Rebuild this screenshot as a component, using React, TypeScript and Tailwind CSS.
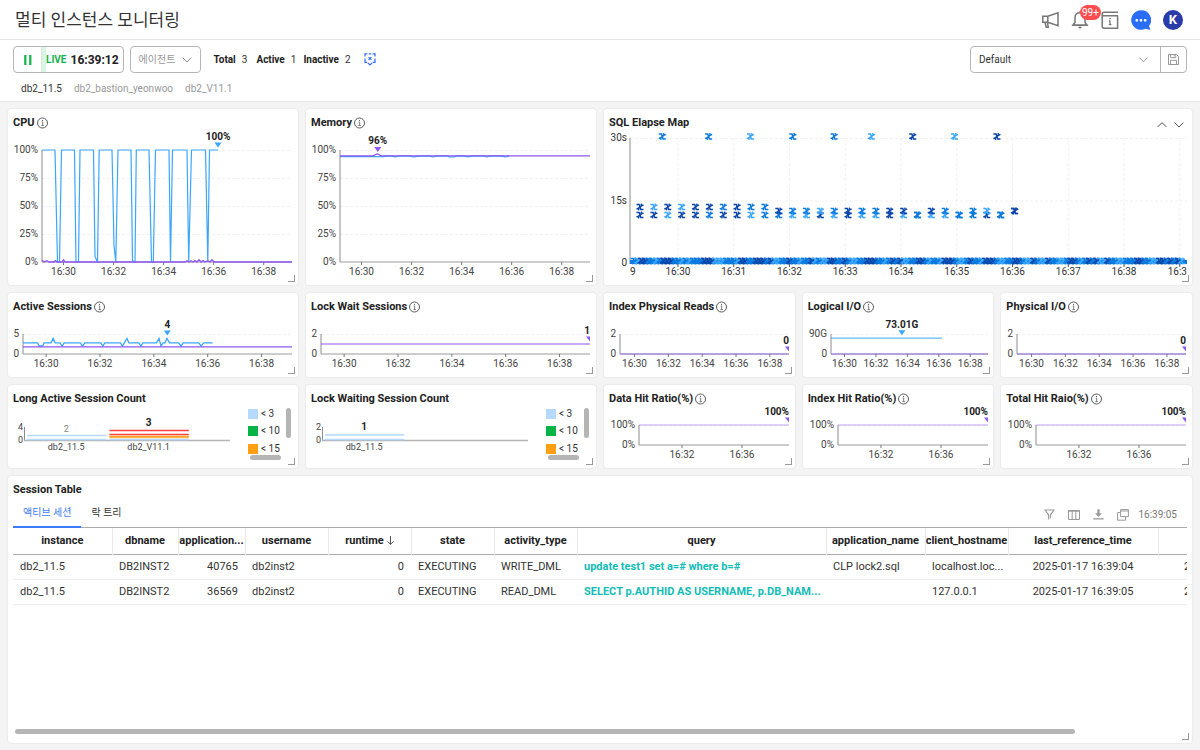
import { useLayoutEffect, useRef, useState } from "react";
import type { ReactNode } from "react";

const BLUE = "#3aa6ff";
const PURPLE = "#8e57f5";
const T0 = 29.14;
const T1 = 39.13;

type Point = [number, number];
type Series = { color: string; points: Point[]; width?: number; opacity?: number };
type Peak = { t: number; value: number; label: string; color: string };

function useWidth() {
  const ref = useRef<HTMLDivElement>(null);
  const [width, setWidth] = useState(0);
  useLayoutEffect(() => {
    const el = ref.current;
    if (!el) return;
    const update = () => setWidth(el.clientWidth);
    update();
    const observer = new ResizeObserver(update);
    observer.observe(el);
    return () => observer.disconnect();
  }, []);
  return { ref, width };
}

function InfoIcon() {
  return (
    <svg className="mb-px size-3" viewBox="0 0 12 12" fill="none" stroke="#5c5c5c" aria-hidden="true">
      <circle cx="5.5" cy="6" r="5" strokeWidth="1" />
      <path d="M4.7 5.1H5.7V8.6M4.4 8.6H6.9" strokeWidth="0.8" />
      <path d="M5.5 3v1" strokeWidth="1" />
    </svg>
  );
}

function Panel({
  title,
  info,
  span,
  tools,
  children,
}: {
  title: string;
  info?: boolean;
  span: string;
  tools?: ReactNode;
  children: ReactNode;
}) {
  return (
    <section className={`relative flex min-w-0 flex-col rounded-[3px] bg-white shadow-[0_0_2px_rgba(0,0,0,0.12)] ${span}`}>
      <header className="flex h-[21px] shrink-0 items-end gap-[2px] px-[5px]">
        <h2 className="text-[11px] leading-[14px] font-bold text-[#222]">{title}</h2>
        {info && <InfoIcon />}
        {tools}
      </header>
      {children}
      <span className="absolute right-[3px] bottom-[3px] size-[7px] border-r border-b border-[#999]" />
    </section>
  );
}

function LineChart({
  height,
  left,
  top,
  bottom,
  max,
  yTicks,
  xTicks = [30, 32, 34, 36, 38],
  series,
  peak,
}: {
  height: number;
  left: number;
  top: number;
  bottom: number;
  max: number;
  yTicks: [number, string][];
  xTicks?: number[];
  series: Series[];
  peak: Peak;
}) {
  const { ref, width } = useWidth();
  const right = width - 6;
  const x = (t: number) => left + ((t - T0) / (T1 - T0)) * (right - left);
  const y = (v: number) => bottom - (v / max) * (bottom - top);
  const px = x(peak.t);
  const py = y(peak.value);
  const atEdge = px > right - 8;
  return (
    <div ref={ref} className="w-full">
      {width > 0 && (
        <svg className="block" width={width} height={height} fontSize="10" fill="#444">
          {yTicks.map(([v, label]) => (
            <g key={label}>
              {v > 0 && <path d={`M${left} ${y(v) + 0.5}H${right}`} stroke="#f1f1f1" strokeDasharray="3 2" />}
              <text x={left - 4} y={y(v) + 3} textAnchor="end">
                {label}
              </text>
            </g>
          ))}
          <path d={`M${left} ${top}V${bottom}`} stroke="#8c8c8c" />
          <path d={`M${left} ${bottom}H${right}`} stroke="#9a9a9a" />
          {xTicks.map((t) => (
            <g key={t}>
              <path d={`M${x(t)} ${bottom}v3`} stroke="#777" />
              <text x={x(t)} y={bottom + 13} textAnchor="middle">
                16:{t}
              </text>
            </g>
          ))}
          {series.map((s, i) => (
            <polyline
              key={i}
              points={s.points.map(([t, v]) => `${x(t).toFixed(1)},${y(v).toFixed(1)}`).join(" ")}
              fill="none"
              stroke={s.color}
              strokeWidth={s.width ?? 1.3}
              strokeOpacity={s.opacity ?? 1}
            />
          ))}
          {atEdge ? (
            <path d={`M${right - 4} ${py - 7.5}H${right}V${py - 2.5}Z`} fill={peak.color} />
          ) : (
            <path d={`M${px - 3.5} ${py - 7.5}h7l-3.5 5Z`} fill={peak.color} />
          )}
          <text
            x={atEdge ? right : px}
            y={py - 10}
            textAnchor={atEdge ? "end" : "middle"}
            fontWeight="700"
            fill="#222"
          >
            {peak.label}
          </text>
        </svg>
      )}
    </div>
  );
}

/* Converts positions on the 0-250 time track of the CPU panel to minutes. */
const track = (p: number) => T0 + (p / 250) * (T1 - T0);

const cpuPoints: Point[] = (
  [
    [0, 100], [13, 100], [15.5, 0], [17.5, 0], [19.5, 100], [32.5, 100], [34, 0], [36.5, 0], [38, 100], [51.5, 100],
    [53, 5], [55.5, 0], [57.2, 100], [70, 100], [72, 15], [73.8, 0], [76, 100], [89, 100], [90.5, 1], [93, 0],
    [94.3, 100], [107, 100], [109.5, 0], [111.3, 0], [113.5, 100], [127, 100], [128.5, 0], [130.5, 100], [145, 100],
    [146.7, 0], [149.5, 100], [163.5, 100], [165.8, 0], [167.5, 100], [176, 100],
  ] as Point[]
).map(([p, v]) => [track(p), v]);

const cpuIdle: Point[] = (
  [
    [0, 1.5], [2, 0], [5, 1.2], [7, 0], [12, 0], [13.5, 1.2], [15, 0], [20, 0], [21.5, 1.8], [23, 0], [143, 0],
    [145, 1], [147, 0], [149, 1], [151, 0], [153, 1.2], [155, 0], [157, 2], [159, 0], [161, 1.2], [163, 0], [166, 1.2],
    [168, 0], [170, 2], [172, 0], [250, 0],
  ] as Point[]
).map(([p, v]) => [track(p), v]);

const flat = (v: number, end = T1): Point[] => [[T0, v], [end, v]];

const memoryBlue: Point[] = [
  [T0, 94], [30.9, 94], [31, 94.6], [31.2, 94.6], [31.35, 93.8], [31.5, 94.6], [31.9, 94.6], [32.1, 93.8], [32.3, 94.6],
  [32.7, 94.6], [32.85, 93.8], [33, 94.6], [33.4, 94.6], [33.5, 93.8], [33.7, 93.8], [33.8, 94.6], [34.1, 94.6],
  [34.25, 93.8], [34.4, 94.6], [34.9, 94.6], [35, 93.8], [35.15, 94.6], [35.6, 94.6], [35.75, 93.8], [35.9, 94.6],
];
const memoryPurple: Point[] = [[T0, 94.8], [30.45, 94.8], [30.63, 96.5], [30.8, 94.8], [T1, 94.8]];

const activeBlue: Point[] = (
  [
    [0, 2.8], [14.5, 2.8], [16, 2], [19.5, 2], [21, 2.8], [28, 2.8], [30, 3.9], [32, 2.8], [37, 2.8], [39, 2], [41, 2.8],
    [57, 2.8], [59.5, 2], [61.5, 2.8], [77.5, 2.8], [79.5, 2], [81.5, 2.8], [97, 2.8], [99, 2], [103.5, 3.9],
    [105.5, 2.8], [115.5, 2.8], [117.5, 2], [119.5, 2.8], [133, 2.8], [135.5, 3.9], [137.5, 2], [139.5, 2.8],
    [141.5, 2.8], [143.5, 3.9], [146, 2.8], [155, 2.8], [157.5, 2], [159.5, 2.8], [175, 2.8], [177.5, 2], [180, 2.8],
    [189, 2.8],
  ] as Point[]
).map(([p, v]) => [T0 + (p / 268) * (T1 - T0), v]);

const SHADES = ["#0b46a8", "#0c7ade", "#3aa6ff"];
/* Paired transactions: height of the upper and lower mark with a shade for each. */
const pairs: [number, number, number, number][] = [
  [77, 0, 85, 0], [77, 2, 85, 0], [77, 0, 85, 2], [77, 2, 85, 0], [77, 0, 85, 0], [77, 0, 85, 1], [77, 1, 85, 0],
  [77, 0, 85, 0], [77, 1, 85, 2], [77, 1, 85, 1], [81, 0, 85, 1], [81, 1, 85, 2], [81, 1, 85, 2], [81, 2, 85, 0],
  [81, 1, 85, 2], [81, 0, 85, 0], [81, 1, 85, 2], [81, 1, 85, 2], [81, 0, 85, 0], [81, 0, 85, 2], [85, 1, 85, 1],
  [81, 0, 85, 2], [81, 1, 85, 2], [85, 1, 85, 1], [81, 1, 85, 1], [81, 2, 85, 0], [85, 1, 85, 1], [81, 0, 81, 0],
];
const capped: [number, number][] = [
  [29.72, 1], [30.55, 1], [31.3, 2], [32.06, 1], [32.8, 1], [33.47, 2], [34.21, 0], [34.96, 2], [35.72, 0],
];
const baseShades =
  "1200112100011212111000222111200110001022110112110212200110122110001121010221100121120001221011200012211001220122011221001210102201122111001122001010221100110221011022001011220100";

function Mark({ x, y, shade }: { x: number; y: number; shade: number }) {
  return (
    <path
      transform={`translate(${x.toFixed(1)} ${y.toFixed(1)})`}
      d="M-3.5-2.4H-0.8L0.8 2.4H3.5M1.2-3.3L1.6-1.4L-1.6 1.4L-1.2 3.3M3.5-2.2L1 -0.8L-1 0.8L-3.5 2.2"
      fill="none"
      stroke={SHADES[shade]}
      strokeWidth="1.5"
    />
  );
}

function ElapseMap() {
  const { ref, width } = useWidth();
  const left = 26;
  const top = 8;
  const bottom = 133;
  const right = width - 5;
  const x = (t: number) => left + ((t - T0) / (T1 - T0)) * (right - left);
  const count = Math.max(0, Math.floor((right - left - 4) / 3.7));
  return (
    <div ref={ref} className="w-full">
      {width > 0 && (
        <svg className="block" width={width} height={155} fontSize="10" fill="#333">
          {[
            [top, "30s"],
            [70.5, "15s"],
            [bottom, "0"],
          ].map(([y, label]) => (
            <g key={label}>
              <path d={`M${left} ${Number(y) + 0.5}H${right}`} stroke="#f1f1f1" strokeDasharray="3 2" />
              <text x={left - 3} y={Number(y) + 3} textAnchor="end">
                {label}
              </text>
            </g>
          ))}
          {[30, 31, 32, 33, 34, 35, 36, 37, 38, 39].map((m) => (
            <g key={m}>
              <path d={`M${x(m)} ${top}V${bottom}`} stroke="#f1f1f1" strokeDasharray="3 2" />
              <path d={`M${x(m)} ${bottom}v4`} stroke="#555" />
              {m < 39 && (
                <text x={x(m)} y={bottom + 12} textAnchor="middle">
                  16:{m}
                </text>
              )}
            </g>
          ))}
          <text x={left} y={bottom + 12}>9</text>
          <text x={right} y={bottom + 12} textAnchor="end">16:3</text>
          <path d={`M${left} ${top}V${bottom + 1}`} stroke="#8c8c8c" />
          {capped.map(([t, shade]) => (
            <Mark key={t} x={x(t)} y={6.5} shade={shade} />
          ))}
          {pairs.map(([y1, s1, y2, s2], i) => (
            <g key={i}>
              <Mark x={x(29.32 + i * 0.2488)} y={y2} shade={s2} />
              <Mark x={x(29.32 + i * 0.2488)} y={y1} shade={s1} />
            </g>
          ))}
          <path d={`M${left} ${bottom - 1}H${right}`} stroke="#0c7ade" strokeWidth="4" />
          {Array.from({ length: count }, (_, i) => (
            <Mark key={i} x={left + 4 + i * 3.7} y={bottom - 2} shade={Number(baseShades[i % baseShades.length])} />
          ))}
        </svg>
      )}
    </div>
  );
}

type Bar = { name: string; label: string; strong?: boolean; stripes: [number, string][] };

function CountChart({ max, bars }: { max: string; bars: Bar[] }) {
  const { ref, width } = useWidth();
  const slot = (width - 16) / 2.5;
  return (
    <div className="flex min-h-0 flex-1">
      <div ref={ref} className="min-w-0 flex-1">
        {width > 0 && (
          <svg className="block" width={width} height={62} fontSize="9" fill="#444">
            <text x="15" y="24" textAnchor="end">{max}</text>
            <text x="15" y="37" textAnchor="end">0</text>
            <path d="M16.5 21V35" stroke="#8c8c8c" />
            <path d={`M16 34.5H${width}`} stroke="#b5b5b5" strokeWidth="1.4" />
            {bars.map((bar, i) => {
              const x0 = 19 + i * slot;
              return (
                <g key={bar.name}>
                  {bar.stripes.map(([y, color]) => (
                    <path key={y} d={`M${x0} ${y}h${slot - 3}`} stroke={color} strokeWidth="1.3" />
                  ))}
                  <text
                    x={x0 + slot / 2 - 2}
                    y={bar.stripes[0][0] - (bar.strong ? 5 : 4)}
                    textAnchor="middle"
                    fontSize={bar.strong ? 10 : 9}
                    fontWeight={bar.strong ? 700 : 400}
                    fill={bar.strong ? "#222" : "#888"}
                  >
                    {bar.label}
                  </text>
                  <text x={x0 + slot / 2 - 2} y="44" textAnchor="middle">{bar.name}</text>
                </g>
              );
            })}
          </svg>
        )}
      </div>
      <div className="mr-[7px] ml-[18px] flex w-[43px] justify-between">
        <div>
          <ul className="text-[10px] leading-[13px] text-[#333]">
            <li className="mb-1 flex items-center gap-[3px] whitespace-nowrap pt-px">
              <i className="size-[10px] bg-[#b5d9ff]" />&lt; 3
            </li>
            <li className="mb-[5px] flex items-center gap-[3px] whitespace-nowrap">
              <i className="size-[10px] bg-[#06b445]" />&lt; 10
            </li>
            <li className="flex items-center gap-[3px] whitespace-nowrap">
              <i className="size-[10px] bg-[#ff9f14]" />&lt; 15
            </li>
          </ul>
          <div className="ml-0.5 h-[5px] w-[31px] rounded-full bg-[#b5b5b5]" />
        </div>
        <div className="mt-0.5 h-[30px] w-[5px] shrink-0 rounded-full bg-[#b5b5b5]" />
      </div>
    </div>
  );
}

const small = { height: 63, top: 20, bottom: 40 };
const ratio = {
  height: 62,
  left: 35,
  top: 19,
  bottom: 39,
  max: 100,
  yTicks: [[100, "100%"], [0, "0%"]] as [number, string][],
  xTicks: [32, 36],
  series: [{ color: PURPLE, points: flat(100), width: 1, opacity: 0.55 }],
  peak: { t: T1, value: 100, label: "100%", color: PURPLE },
};
const percentTicks: [number, string][] = [[100, "100%"], [75, "75%"], [50, "50%"], [25, "25%"], [0, "0%"]];
const zeroPeak: Peak = { t: T1, value: 0, label: "0", color: PURPLE };
const zeroSeries: Series[] = [{ color: PURPLE, points: flat(0), width: 1.2, opacity: 0.7 }];
const twoTicks: [number, string][] = [[2, "2"], [0, "0"]];

function TopBar() {
  return (
    <header className="flex h-10 items-center justify-between border-b border-[#e6e6e6] pr-[17px] pl-[15px]">
      <h1 className="text-[17px] leading-6 text-[#333]">멀티 인스턴스 모니터링</h1>
      <div className="flex items-center">
        <button aria-label="공지" className="mr-3">
          <svg className="block size-[18px]" viewBox="0 0 18 18" fill="none" stroke="#777" strokeWidth="1.5">
            <path d="M1.8 5.3H6.8V11.2H1.8ZM6.8 5.3L17 1.9V14.6L6.8 11.2M4 11.2L5.2 16.2H7.2L6.5 11.4" />
          </svg>
        </button>
        <button aria-label="알림" className="relative mr-3">
          <svg className="block size-[18px]" viewBox="0 0 18 18" fill="none" stroke="#777" strokeWidth="1.5">
            <path d="M9 1.8C5.6 1.8 4 4.2 4 7V11.2L2.6 13.3V14.1H15.4V13.3L14 11.2V7C14 4.2 12.4 1.8 9 1.8ZM0.8 14.2H17.2M9 0.3V1.8" />
            <path d="M6.8 15.8H11.2L9.7 17.6H8.3Z" fill="#777" stroke="none" />
          </svg>
          <span className="absolute -top-[6px] left-[9px] flex h-[15px] items-center rounded-full bg-[#ff4d4f] px-[2px] text-[10px] leading-[15px] text-white">
            99+
          </span>
        </button>
        <button aria-label="문서" className="mr-3">
          <svg className="block size-[18px]" viewBox="0 0 18 18" fill="none" stroke="#777" strokeWidth="1.5">
            <path d="M17 4.8H2.8Q1.2 4.8 1.2 3.2Q1.2 1.2 3 1.2H17M1.2 3V15Q1.2 17.2 3 17.2H16.6V4.8" />
            <path d="M9 9.6V13.8M8 9.8H9M7.8 13.6H10.4M8.3 7.6h1.5" strokeWidth="1.3" />
          </svg>
        </button>
        <button aria-label="채팅" className="mr-3">
          <svg className="block size-5" viewBox="0 0 20 20">
            <path d="M10 0.2A9.8 9.8 0 1 0 14.5 18.7L19.4 20L18 16A9.8 9.8 0 0 0 10 0.2Z" fill="#2b6ef6" />
            <path d="M5.8 8.9a1.4 1.4 0 1 1 0 2.8a1.4 1.4 0 0 1 0-2.8M10 8.9a1.4 1.4 0 1 1 0 2.8a1.4 1.4 0 0 1 0-2.8M14.2 8.9a1.4 1.4 0 1 1 0 2.8a1.4 1.4 0 0 1 0-2.8" fill="#fff" />
          </svg>
        </button>
        <button className="flex size-5 items-center justify-center rounded-full bg-[#2b3ba9] text-[13px] leading-5 font-bold text-white">
          K
        </button>
      </div>
    </header>
  );
}

function ControlBar() {
  return (
    <div className="border-b border-[#e6e6e6] px-[13px] pt-1.5 pb-1 text-[10px] leading-4 text-[#333]">
      <div className="flex items-center">
        <button className="flex h-[27px] items-stretch rounded-[4px] border border-[#b5b5b5] text-[#222]">
          <span className="flex w-[27px] items-center justify-center">
            <svg className="h-[10px] w-2" viewBox="0 0 8 10" fill="#12b34a" aria-hidden="true">
              <path d="M0.2 0h2.2v10H0.2zM5.2 0h2.2v10H5.2z" />
            </svg>
          </span>
          <span className="w-[5px] border-l border-[#e2e2e2] bg-[#d9f6e2]" />
          <span className="flex items-center font-bold text-[#12b34a]">LIVE</span>
          <span className="flex items-center px-1 text-[12px] font-bold">16:39:12</span>
        </button>
        <button className="ml-[6px] flex h-[27px] items-center gap-[7px] rounded-[4px] border border-[#b5b5b5] px-2 text-[#999]">
          에이전트
          <svg className="h-[6px] w-[10px]" viewBox="0 0 10 6" fill="none" stroke="#999" aria-hidden="true">
            <path d="M0.6 0.6L5 5L9.4 0.6" />
          </svg>
        </button>
        <dl className="ml-3 flex items-center">
          <dt className="font-bold text-[#222]">Total</dt>
          <dd className="mr-[9px] ml-[6px]">3</dd>
          <dt className="font-bold text-[#222]">Active</dt>
          <dd className="mr-[7px] ml-[6px]">1</dd>
          <dt className="font-bold text-[#222]">Inactive</dt>
          <dd className="mr-[13px] ml-[6px]">2</dd>
        </dl>
        <button aria-label="에이전트 초기화">
          <svg className="block h-[13px] w-3" viewBox="0 0 12 13" fill="none" stroke="#2f6df6" strokeWidth="1.2">
            <path d="M3.4 0.8H1V3.6M8.6 0.8H11V3.6M4.8 0.8H7.2M1 5.4V9.4H3.2M11 5.4V9.4H8.8M3.8 9.8L6 12L8.2 9.8" />
            <path d="M4.6 4.1L7.4 6.9M7.4 4.1L4.6 6.9" />
          </svg>
        </button>
        <div className="ml-auto flex h-[27px] w-[217px] rounded-[4px] border border-[#b5b5b5]">
          <div className="relative flex-1">
            <select aria-label="프리셋" defaultValue="Default" className="size-full appearance-none bg-transparent pl-2 text-[10px] text-[#333]">
              <option>Default</option>
            </select>
            <svg className="pointer-events-none absolute top-[10px] right-3 h-[6px] w-[9px]" viewBox="0 0 9 6" fill="none" stroke="#999">
              <path d="M0.6 0.8L4.5 4.8L8.4 0.8" />
            </svg>
          </div>
          <button aria-label="저장" className="flex w-[26px] items-center justify-center border-l border-[#b5b5b5]">
            <svg className="size-[11px]" viewBox="0 0 11 11" fill="none" stroke="#999">
              <path d="M0.5 0.5H8.5L10.5 2.5V10.5H0.5ZM2.7 0.5V3.6H7.8V0.5M2.5 10.5V6.3H8.5V10.5M6.2 1V2.4" />
            </svg>
          </button>
        </div>
      </div>
      <ul className="mt-2 flex gap-3 pl-2 text-[#999]">
        <li className="text-[#333]">db2_11.5</li>
        <li>db2_bastion_yeonwoo</li>
        <li>db2_V11.1</li>
      </ul>
    </div>
  );
}

const columns = [
  { name: "instance", col: "w-[99px]", cell: "" },
  { name: "dbname", col: "w-[66px]", cell: "" },
  { name: "application...", col: "w-[67px]", cell: "text-right" },
  { name: "username", col: "w-[83px]", cell: "" },
  { name: "runtime", col: "w-[83px]", cell: "text-right" },
  { name: "state", col: "w-[83px]", cell: "" },
  { name: "activity_type", col: "w-[83px]", cell: "" },
  { name: "query", col: "w-[249px]", cell: "font-bold text-[#12bdb5]" },
  { name: "application_name", col: "w-[99px]", cell: "" },
  { name: "client_hostname", col: "w-[83px]", cell: "" },
  { name: "last_reference_time", col: "w-[150px]", cell: "text-center" },
  { name: "", col: "w-[150px]", cell: "pl-[26px]" },
];
const rows = [
  ["db2_11.5", "DB2INST2", "40765", "db2inst2", "0", "EXECUTING", "WRITE_DML", "update test1 set a=# where b=#", "CLP lock2.sql", "localhost.loc...", "2025-01-17 16:39:04", "2"],
  ["db2_11.5", "DB2INST2", "36569", "db2inst2", "0", "EXECUTING", "READ_DML", "SELECT p.AUTHID AS USERNAME, p.DB_NAM...", "", "127.0.0.1", "2025-01-17 16:39:05", "2"],
];

function SessionTable() {
  return (
    <Panel title="Session Table" span="col-span-12 min-h-[267px]">
      <div className="mx-[5px] mt-[6px] flex h-[25px] items-end justify-between border-b border-[#aaa] text-[10px] leading-4">
        <div role="tablist" className="flex">
          <button role="tab" aria-selected="true" className="-mb-px h-[25px] border-b-2 border-[#3d7bf7] px-[10px] pb-1 text-[#3d7bf7]">
            액티브 세션
          </button>
          <button role="tab" aria-selected="false" className="h-6 px-[10px] pb-1 text-[#333]">락 트리</button>
        </div>
        <div className="flex h-[25px] items-center gap-[13px] pr-[10px]">
          <button aria-label="필터">
            <svg className="block size-[11px]" viewBox="0 0 11 11" fill="none" stroke="#999">
              <path d="M0.4 1H10.6M1 1L4.6 5.8V10.6M10 1L6.4 5.8V9.2" strokeWidth="1.1" />
            </svg>
          </button>
          <button aria-label="컬럼">
            <svg className="block h-[10px] w-3" viewBox="0 0 12 10" fill="none" stroke="#999">
              <path d="M0.5 0.5H11.5V9.5H0.5ZM4.2 0.5V9.5M7.8 0.5V9.5M0.5 1.2H11.5" />
            </svg>
          </button>
          <button aria-label="다운로드">
            <svg className="block size-[11px]" viewBox="0 0 11 11" fill="#999">
              <path d="M4.4 0.2H6.6V4.2H9L5.5 8L2 4.2H4.4ZM0.3 9.2H10.7V10.6H0.3Z" />
            </svg>
          </button>
          <button aria-label="새 창">
            <svg className="block size-3" viewBox="0 0 12 12" fill="none" stroke="#999">
              <path d="M3.6 0.6H11.4V7.6H3.6ZM3.6 2H11.4M3.4 3.6H0.6V11.2H8.6V7.8" />
            </svg>
          </button>
          <time className="-ml-1 text-[#777]">16:39:05</time>
        </div>
      </div>
      <div className="mx-[5px] flex-1 overflow-x-auto overflow-y-hidden [scrollbar-width:none]">
        <table className="w-[1295px] table-fixed border-collapse text-[11px] leading-4 text-[#333]">
          <colgroup>
            {columns.map((c) => (
              <col key={c.name} className={c.col} />
            ))}
          </colgroup>
          <thead>
            <tr className="h-[26px] border-b border-[#aaa] text-[#222]">
              {columns.map((c) => (
                <th key={c.name} className="overflow-hidden border-r border-[#e8e8e8] p-0 font-bold whitespace-nowrap">
                  {c.name}
                  {c.name === "runtime" && (
                    <svg className="ml-[3px] inline-block h-[9px] w-[7px]" viewBox="0 0 7 9" fill="none" stroke="#555">
                      <path d="M3.5 0V8.4M0.5 5.4L3.5 8.4L6.5 5.4" />
                    </svg>
                  )}
                </th>
              ))}
            </tr>
          </thead>
          <tbody>
            {rows.map((row, r) => (
              <tr key={r} className="h-[25px] border-b border-[#ececec]">
                {row.map((value, i) => (
                  <td key={i} className={`overflow-hidden px-[7px] py-0 whitespace-nowrap ${columns[i].cell}`}>
                    {value}
                  </td>
                ))}
              </tr>
            ))}
          </tbody>
        </table>
      </div>
      <div className="mb-[9px] ml-[7px] h-[5px] w-[89.5%] rounded-full bg-[#b5b5b5]" />
    </Panel>
  );
}

export default function App() {
  return (
    <div className="min-h-screen bg-[#f4f4f4] font-[Roboto,'Noto_Sans_CJK_KR',sans-serif] text-[#333]">
      <div className="bg-white">
        <TopBar />
        <ControlBar />
      </div>
      <main className="grid grid-cols-12 gap-2 px-2 pt-[7px] pb-[7px]">
        <Panel title="CPU" info span="col-span-3">
          <LineChart
            height={155} left={34} top={20} bottom={132} max={100} yTicks={percentTicks}
            series={[
              { color: BLUE, points: cpuPoints, width: 1.2 },
              { color: PURPLE, points: cpuIdle, width: 1.4 },
            ]}
            peak={{ t: track(176), value: 100, label: "100%", color: BLUE }}
          />
        </Panel>
        <Panel title="Memory" info span="col-span-3">
          <LineChart
            height={155} left={34} top={20} bottom={132} max={100} yTicks={percentTicks}
            series={[
              { color: BLUE, points: memoryBlue },
              { color: PURPLE, points: memoryPurple },
            ]}
            peak={{ t: 30.65, value: 96, label: "96%", color: PURPLE }}
          />
        </Panel>
        <Panel
          title="SQL Elapse Map"
          span="col-span-6"
          tools={
            <div className="ml-auto flex gap-[7px] pr-[3px] pb-px">
              <button aria-label="위로">
                <svg className="block h-2 w-[10px]" viewBox="0 0 10 8" fill="none" stroke="#555">
                  <path d="M0.6 6L5 1.6L9.4 6" />
                </svg>
              </button>
              <button aria-label="아래로">
                <svg className="block h-2 w-[10px]" viewBox="0 0 10 8" fill="none" stroke="#555">
                  <path d="M0.6 1.6L5 6L9.4 1.6" />
                </svg>
              </button>
            </div>
          }
        >
          <ElapseMap />
        </Panel>

        <Panel title="Active Sessions" info span="col-span-3">
          <LineChart
            {...small} left={15} max={5} yTicks={[[5, "5"], [0, "0"]]}
            series={[
              { color: BLUE, points: activeBlue },
              { color: PURPLE, points: flat(1.8), width: 1.2 },
            ]}
            peak={{ t: 34.5, value: 4, label: "4", color: BLUE }}
          />
        </Panel>
        <Panel title="Lock Wait Sessions" info span="col-span-3">
          <LineChart
            {...small} left={15} max={2} yTicks={twoTicks}
            series={[{ color: PURPLE, points: flat(1), width: 1.2 }]}
            peak={{ t: T1, value: 1, label: "1", color: PURPLE }}
          />
        </Panel>
        <Panel title="Index Physical Reads" info span="col-span-2">
          <LineChart {...small} left={16} max={2} yTicks={twoTicks} series={zeroSeries} peak={zeroPeak} />
        </Panel>
        <Panel title="Logical I/O" info span="col-span-2">
          <LineChart
            {...small} left={28} max={90} yTicks={[[90, "90G"], [0, "0"]]}
            series={[...zeroSeries, { color: BLUE, points: flat(71, 36.2), opacity: 0.8 }]}
            peak={{ t: 33.65, value: 73, label: "73.01G", color: BLUE }}
          />
        </Panel>
        <Panel title="Physical I/O" info span="col-span-2">
          <LineChart {...small} left={16} max={2} yTicks={twoTicks} series={zeroSeries} peak={zeroPeak} />
        </Panel>

        <Panel title="Long Active Session Count" span="col-span-3">
          <CountChart
            max="4"
            bars={[
              { name: "db2_11.5", label: "2", stripes: [[29.5, "#b5d9ff"], [33.5, "#b5d9ff"]] },
              {
                name: "db2_V11.1",
                label: "3",
                strong: true,
                stripes: [[24.5, "#ff4040"], [28.5, "#ff4040"], [30.5, "#ff9f14"], [31.5, "#ffb54d"], [33.5, "#b5d9ff"]],
              },
            ]}
          />
        </Panel>
        <Panel title="Lock Waiting Session Count" span="col-span-3">
          <CountChart
            max="2"
            bars={[{ name: "db2_11.5", label: "1", strong: true, stripes: [[29, "#b5d9ff"], [33.5, "#b5d9ff"]] }]}
          />
        </Panel>
        <Panel title="Data Hit Ratio(%)" info span="col-span-2">
          <LineChart {...ratio} />
        </Panel>
        <Panel title="Index Hit Ratio(%)" info span="col-span-2">
          <LineChart {...ratio} />
        </Panel>
        <Panel title="Total Hit Raio(%)" info span="col-span-2">
          <LineChart {...ratio} />
        </Panel>

        <SessionTable />
      </main>
    </div>
  );
}
